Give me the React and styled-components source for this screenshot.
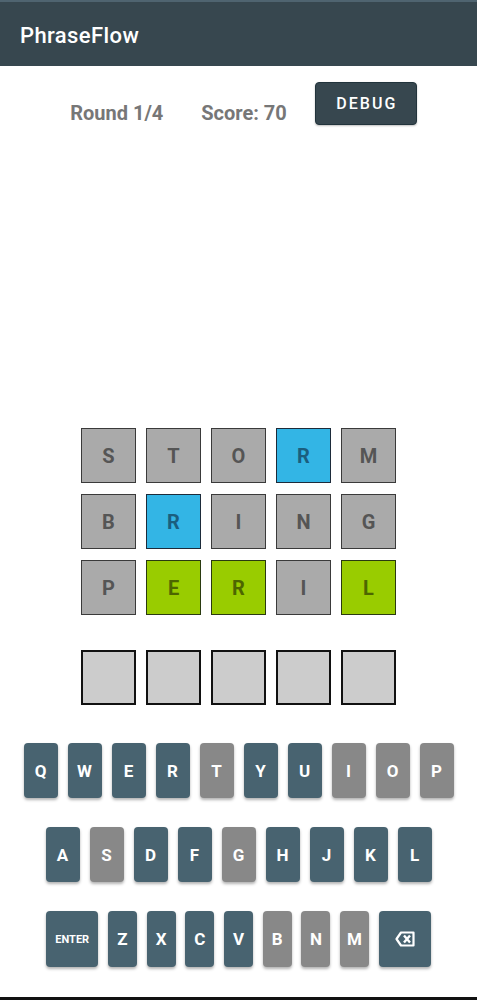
import React from "react";
import styled, { createGlobalStyle } from "styled-components";

const GlobalStyle = createGlobalStyle`
  body {
    margin: 0;
    background: #fff;
    font-family: Roboto, "Noto Sans", sans-serif;
  }
`;

const guesses = [
  [["S", "miss"], ["T", "miss"], ["O", "miss"], ["R", "near"], ["M", "miss"]],
  [["B", "miss"], ["R", "near"], ["I", "miss"], ["N", "miss"], ["G", "miss"]],
  [["P", "miss"], ["E", "hit"], ["R", "hit"], ["I", "miss"], ["L", "hit"]],
];

const usedKeys = "TIOPSGBNM";

const keyRows = [
  ["Q", "W", "E", "R", "T", "Y", "U", "I", "O", "P"],
  ["A", "S", "D", "F", "G", "H", "J", "K", "L"],
  ["ENTER", "Z", "X", "C", "V", "B", "N", "M", "BACK"],
];

const tileColors = {
  miss: { bg: "#aaaaaa", fg: "#555555", border: "#3a3a3a" },
  near: { bg: "#33b5e5", fg: "#1b5e7e", border: "#1d2b3a" },
  hit: { bg: "#99cc00", fg: "#4d6600", border: "#2a3a10" },
};

const BackspaceIcon = () => (
  <svg width="20" height="16" viewBox="0 0 20 16">
    <path
      d="M6 1.5 H18.5 V14.5 H6 L1.5 8 Z"
      fill="none"
      stroke="#fff"
      strokeWidth="2.2"
      strokeLinejoin="round"
    />
    <path d="M9 4.5 L15 11.5 M15 4.5 L9 11.5" stroke="#fff" strokeWidth="2.4" />
  </svg>
);

export default function App() {
  return (
    <Page>
      <GlobalStyle />
      <Header>PhraseFlow</Header>
      <Stats>
        <StatText $gap={38}>Round 1/4</StatText>
        <StatText $gap={28}>Score: 70</StatText>
        <DebugButton>DEBUG</DebugButton>
      </Stats>

      <Board>
        {guesses.map((row, r) => (
          <TileRow key={r}>
            {row.map(([ch, state], i) => (
              <Tile key={i} $state={state}>
                {ch}
              </Tile>
            ))}
          </TileRow>
        ))}
      </Board>

      <InputRow>
        {[0, 1, 2, 3, 4].map((i) => (
          <InputTile key={i} />
        ))}
      </InputRow>

      <Keyboard>
        {keyRows.map((row, r) => (
          <KeyRow key={r} $last={r === 2}>
            {row.map((k) => {
              if (k === "ENTER") return <WideKey key={k} $small>ENTER</WideKey>;
              if (k === "BACK")
                return (
                  <WideKey key={k}>
                    <BackspaceIcon />
                  </WideKey>
                );
              return (
                <Key key={k} $used={usedKeys.includes(k)} $narrow={r === 2}>
                  {k}
                </Key>
              );
            })}
          </KeyRow>
        ))}
      </Keyboard>
      <BottomEdge />
    </Page>
  );
}

const Page = styled.div`
  display: flex;
  flex-direction: column;
  height: 1000px;
  overflow: hidden;
`;

const Header = styled.header`
  height: 64px;
  border-top: 2px solid #4f6470;
  background: #37474f;
  color: #fff;
  font-size: 22px;
  font-weight: 500;
  display: flex;
  align-items: center;
  padding-left: 20px;
  padding-top: 2px;
  box-sizing: border-box;
  height: 66px;
  letter-spacing: 0.4px;
`;

const Stats = styled.div`
  display: flex;
  justify-content: center;
  align-items: flex-end;
  padding-left: 10px;
  margin-top: 16px;
`;

const StatText = styled.span`
  font-size: 20px;
  font-weight: 700;
  color: #777;
  margin-right: ${(p) => p.$gap}px;
  line-height: 20px;
  padding-bottom: 2px;
`;

const DebugButton = styled.button`
  width: 102px;
  height: 43px;
  border: 1px solid #22343c;
  border-radius: 4px;
  background: #37474f;
  color: #fff;
  font-family: Roboto, sans-serif;
  font-size: 16px;
  font-weight: 500;
  letter-spacing: 2px;
  padding: 0 0 0 2px;
  box-shadow: 0 1px 2px rgba(0, 0, 0, 0.25);
`;

const Board = styled.div`
  margin-top: 303px;
  display: flex;
  flex-direction: column;
  align-items: center;
  gap: 11px;
`;

const TileRow = styled.div`
  display: flex;
  gap: 10px;
`;

const Tile = styled.div`
  box-sizing: border-box;
  width: 55px;
  height: 55px;
  display: flex;
  align-items: center;
  justify-content: center;
  background: ${(p) => tileColors[p.$state].bg};
  color: ${(p) => tileColors[p.$state].fg};
  border: 1px solid ${(p) => tileColors[p.$state].border};
  font-size: 20px;
  font-weight: 700;
`;

const InputRow = styled.div`
  margin-top: 35px;
  display: flex;
  justify-content: center;
  gap: 10px;
`;

const InputTile = styled.div`
  box-sizing: border-box;
  width: 55px;
  height: 55px;
  background: #cccccc;
  border: 2px solid #111;
`;

const Keyboard = styled.div`
  margin-top: 38px;
  display: flex;
  flex-direction: column;
  align-items: center;
  gap: 29px;
`;

const KeyRow = styled.div`
  display: flex;
  justify-content: center;
  gap: ${(p) => (p.$last ? 9.7 : 10)}px;
  height: ${(p) => (p.$last ? 56 : 55)}px;
`;

const Key = styled.div`
  width: ${(p) => (p.$narrow ? 29 : 34)}px;
  height: 100%;
  border-radius: 4px;
  background: ${(p) => (p.$used ? "#888888" : "#486370")};
  color: #fff;
  font-size: 17px;
  font-weight: 700;
  display: flex;
  align-items: center;
  justify-content: center;
  box-shadow: 0 2px 3px rgba(0, 0, 0, 0.3);
`;

const WideKey = styled(Key)`
  width: 52px;
  background: #486370;
  font-size: ${(p) => (p.$small ? 11 : 17)}px;
`;

const BottomEdge = styled.div`
  margin-top: auto;
  height: 3px;
  background: #111;
`;
